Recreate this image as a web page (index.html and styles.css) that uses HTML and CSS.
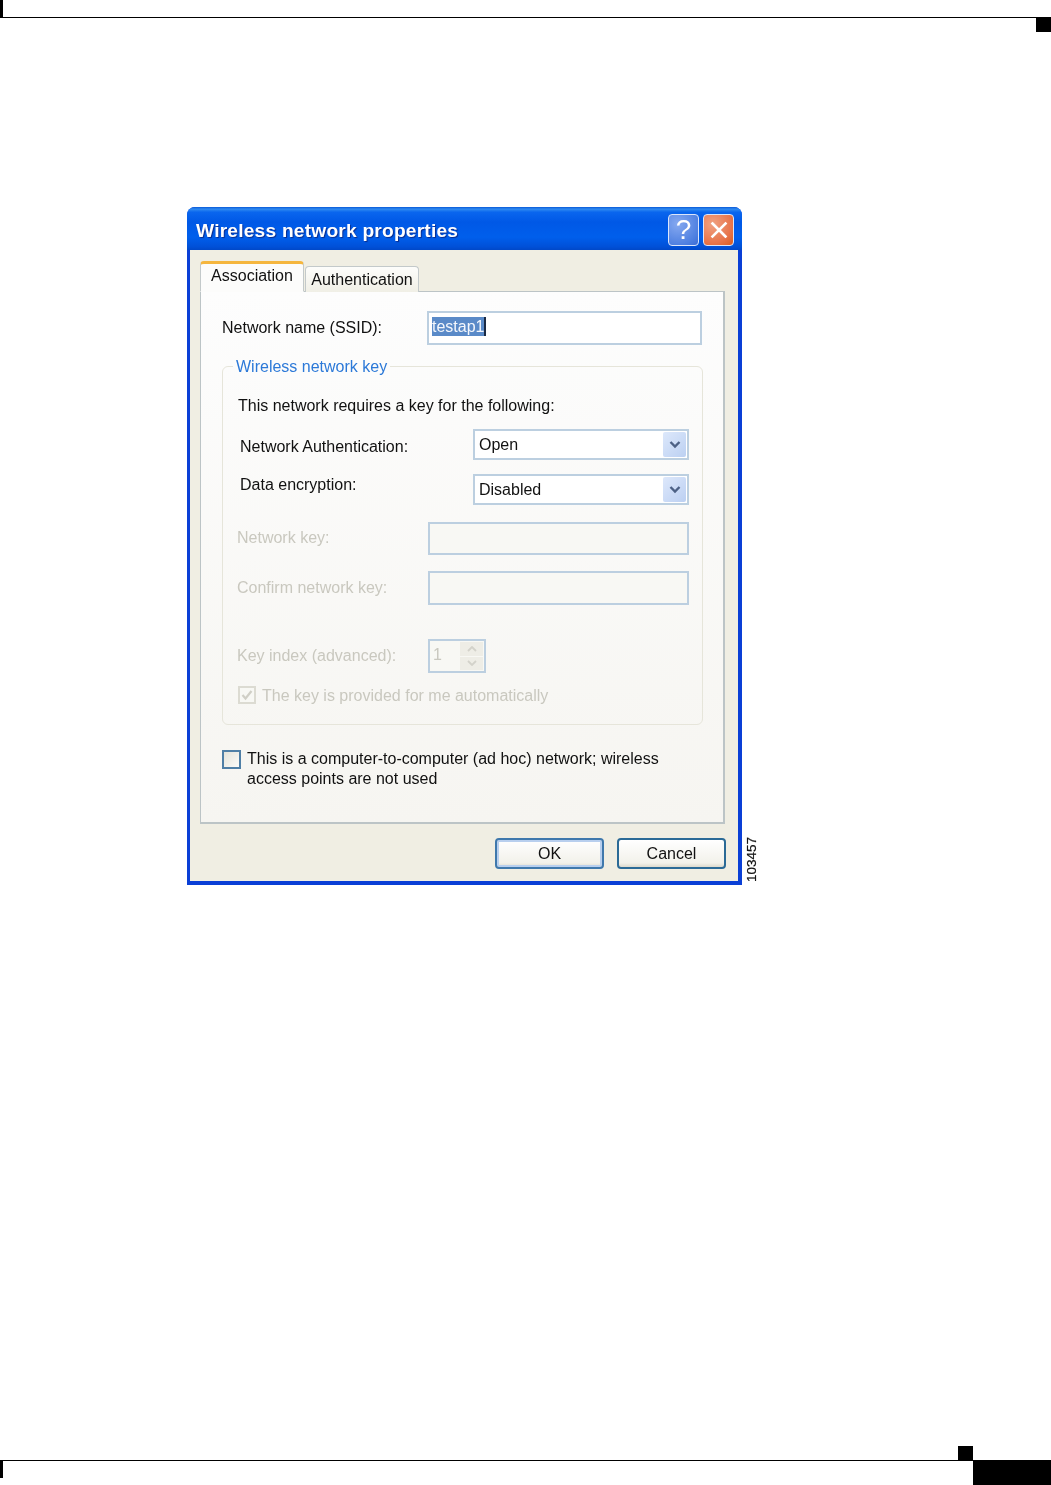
FILE: index.html
```html
<!DOCTYPE html>
<html lang="en">
<head>
<meta charset="utf-8">
<title>Wireless network properties</title>
<link rel="stylesheet" href="styles.css">
</head>
<body>
<div class="page">
  <header class="top">
    <div class="top-rule"><span class="mark"></span></div>
    <div class="top-square"></div>
  </header>
  <main class="figure">
    <section class="dialog">
      <div class="titlebar">
        <span class="title">Wireless network properties</span>
        <span class="cap cap-help">?</span>
        <span class="cap cap-close"><svg width="20" height="20" viewBox="0 0 20 20"><path d="M3.5 3.5 16.5 16.5M16.5 3.5 3.5 16.5" stroke="#fff" stroke-width="2.6" stroke-linecap="square" fill="none"/></svg></span>
      </div>
      <div class="body">
        <div class="tabs">
          <div class="tab tab-active">Association</div>
          <div class="tab">Authentication</div>
        </div>
        <div class="panel">
          <div class="row name-row">
            <span class="label-name">Network name (SSID):</span>
            <div class="field field-name"><span class="selected">testap1</span><span class="caret"></span></div>
          </div>
          <fieldset class="group">
            <legend>Wireless network key</legend>
            <p class="intro">This network requires a key for the following:</p>
            <div class="row sel-row first">
              <span class="label-sel nudge-a">Network Authentication:</span>
              <div class="select"><span class="sel-text">Open</span><span class="drop"><svg width="14" height="10" viewBox="0 0 14 10"><path d="M2.5 2 7 6.5 11.500 2" fill="none" stroke="#4d6185" stroke-width="2.4"/></svg></span></div>
            </div>
            <div class="row sel-row">
              <span class="label-sel nudge-b">Data encryption:</span>
              <div class="select"><span class="sel-text">Disabled</span><span class="drop"><svg width="14" height="10" viewBox="0 0 14 10"><path d="M2.5 2 7 6.500 11.500 2" fill="none" stroke="#4d6185" stroke-width="2.4"/></svg></span></div>
            </div>
            <div class="row off-row key">
              <span class="label-off nudge-key">Network key:</span>
              <div class="field field-off"></div>
            </div>
            <div class="row off-row confirm">
              <span class="label-off">Confirm network key:</span>
              <div class="field field-off tall"></div>
            </div>
            <div class="row off-row index">
              <span class="label-off">Key index (advanced):</span>
              <div class="field spinner">
                <span class="spin-value">1</span>
                <span class="spin-btns">
                  <span class="spin-btn"><svg width="10" height="6" viewBox="0 0 10 6"><path d="M1 5 5 1 9 5" fill="none" stroke="#d3d2ca" stroke-width="1.800"/></svg></span>
                  <span class="spin-btn"><svg width="10" height="6" viewBox="0 0 10 6"><path d="M1 1 5 5 9 1" fill="none" stroke="#d3d2ca" stroke-width="1.800"/></svg></span>
                </span>
              </div>
            </div>
            <div class="auto-row">
              <span class="check-off"><svg width="14" height="14" viewBox="0 0 14 14"><path d="M2.500 7 5.500 10.500 11.500 3" fill="none" stroke="#d0cfc6" stroke-width="2.200"/></svg></span>
              <span class="label-off nudge-auto">The key is provided for me automatically</span>
            </div>
          </fieldset>
          <div class="adhoc">
            <span class="check"></span>
            <span class="adhoc-text">This is a computer-to-computer (ad hoc) network; wireless access points are not used</span>
          </div>
        </div>
        <div class="actions">
          <div class="btn btn-default">OK</div>
          <div class="btn">Cancel</div>
        </div>
      </div>
    </section>
    <div class="fig-no">103457</div>
  </main>
  <footer class="bottom">
    <div class="bottom-square"></div>
    <div class="bottom-bar">
      <div class="bottom-rule"><span class="mark mark-low"></span></div>
      <div class="bottom-block"></div>
    </div>
  </footer>
</div>
</body>
</html>
```
FILE: styles.css
```css
* { box-sizing: border-box; }
html, body { margin: 0; padding: 0; background: #fff; }
.page { height: 1485px; width: 1051px; overflow: hidden; display: flex; flex-direction: column; font-family: "Liberation Sans", sans-serif; }

.top-rule { height: 18px; border-bottom: 1px solid #000; }
.mark { display: block; width: 3px; height: 17px; background: #000; }
.top-square { width: 15px; height: 14px; margin-left: 1036px; background: #000; }

.figure { display: flex; align-items: flex-end; margin: 175px 0 0 187px; }
.fig-no { writing-mode: vertical-rl; transform: rotate(180deg); font: 13.500px/14px "Liberation Sans", sans-serif; color: #111; margin: 0 0 3px 3px; width: 14px; -webkit-text-stroke: 0.2px #111; }

.dialog { width: 555px; height: 678px; display: flex; flex-direction: column; border-radius: 8px 8px 0 0; background: #0a3fd6; color: #111; font-size: 16px; filter: blur(0.35px); }

.titlebar { height: 43px; display: flex; align-items: center; padding: 2px 8px 0 9px; border-radius: 8px 8px 0 0;
  background: linear-gradient(#0a5ad8 0, #2f8af0 5%, #0a66ee 12%, #0058e6 35%, #005fec 70%, #0050d8 92%, #0048c8 100%); }
.title { flex: 1; color: #fff; font-family: "Liberation Sans", sans-serif; font-weight: bold; font-size: 19.200px; letter-spacing: 0.2px; padding-top: 3px; text-shadow: 1px 1px 1px #0a2c8c; }
.cap { width: 31px; height: 32px; border: 1px solid #dbe6fb; border-radius: 4px; display: flex; align-items: center; justify-content: center; color: #fff; }
.cap-help { background: radial-gradient(circle at 30% 30%, #86a9f0, #4c7ee0 75%, #3d6cd4); font: 28px/1 "Liberation Sans", sans-serif; margin-right: 4px; }
.cap-close { background: radial-gradient(circle at 30% 30%, #f0a283, #e7744a 65%, #d95c1e); }

.body { flex: 1; margin: 0 4px 4px 3px; background: #f0eee3; padding: 11px 13px 0 10px; display: flex; flex-direction: column; }

.tabs { display: flex; align-items: flex-end; height: 31px; position: relative; z-index: 1; margin-bottom: -1px; }
.tab { height: 26px; width: 114px; margin-left: 1px; border: 1px solid #c3c9ca; border-bottom: 0; border-radius: 4px 4px 0 0; background: linear-gradient(#fdfdfb, #f0efe6); text-align: center; line-height: 25px; }
.tab-active { height: 31px; width: 104px; margin-left: 0; border-top: 3px solid #f5b63e; background: #fcfcfb; line-height: 24px; padding-bottom: 5px; border-bottom: 1px solid #fcfcfb; }

.panel { height: 533px; border: 1px solid #bcc4c6; border-right-width: 2px; border-bottom-width: 2px; background: linear-gradient(#fdfdfd, #f6f5f1); padding: 19px 21px 0 21px; }

.row { display: flex; align-items: center; }
.name-row { height: 34px; }
.label-name { width: 207px; }
.field { border: 2px solid #bccfe0; background: #fff; }
.field-name { flex: 0 0 275px; height: 34px; display: flex; align-items: center; padding: 0 0 3px 3px; }
.selected { background: #5a8ac8; color: #f4f7fc; line-height: 19px; height: 19px; }
.caret { width: 2px; height: 19px; background: #1a2a44; }

.group { margin: 10px 0 0; width: 481px; height: 370px; border: 1.500px solid #e6e5da; border-radius: 6px; padding: 0 13px 0 15px; display: block; min-width: 0; }
.group legend { padding: 2px 3px 0; margin-left: -5px; line-height: 20px; color: #2c79d8; }
.intro { margin: 19px 0 0; line-height: 20px; }

.sel-row { height: 31px; margin-top: 14px; justify-content: space-between; }
.sel-row.first { margin-top: 13px; }
.label-sel { margin-left: 2px; }
.nudge-a { padding-top: 5px; }
.nudge-b { padding-bottom: 9px; }
.select { width: 216px; height: 31px; border: 2px solid #bccfe0; background: #fff; display: flex; align-items: center; justify-content: space-between; padding: 1px 1px 1px 4px; }
.sel-text { padding-top: 1px; }
.drop { width: 23px; height: 25px; background: linear-gradient(135deg, #dde8fb, #bcd0f2); border-radius: 2px; display: flex; align-items: center; justify-content: center; }

.off-row { justify-content: space-between; margin-left: -1px; }
.label-off { color: #c9c8bf; }
.nudge-key { padding-bottom: 2px; }
.nudge-auto { padding-top: 1px; }
.key { height: 33px; margin-top: 17px; }
.confirm { height: 34px; margin-top: 16px; }
.index { height: 34px; margin-top: 34px; }
.field-off { flex: 0 0 261px; height: 33px; background: #f8f8f4; }
.field-off.tall { height: 34px; }
.spinner { flex: 0 0 58px; height: 34px; margin-right: 203px; background: #f8f8f4; display: flex; justify-content: space-between; padding: 1px 1px 1px 3px; }
.spin-value { color: #c9c8bf; line-height: 26px; }
.spin-btns { width: 23px; display: flex; flex-direction: column; gap: 1px; }
.spin-btn { flex: 1; background: #eeede6; display: flex; align-items: center; justify-content: center; }
.auto-row { display: flex; align-items: center; gap: 6px; height: 18px; margin-top: 13px; }
.check-off { width: 18px; height: 18px; border: 2px solid #dcdbd2; display: flex; align-items: center; justify-content: center; background: #f8f8f4; }

.adhoc { display: flex; gap: 6px; margin-top: 25px; }
.check { flex: 0 0 19px; height: 19px; border: 2px solid #4f7fa6; background: linear-gradient(135deg, #e4e3da, #fbfbf8); }
.adhoc-text { line-height: 20px; margin-top: -1px; width: 425px; }

.actions { display: flex; justify-content: flex-end; gap: 13px; margin: 14px -1px 0 0; }
.btn { width: 109px; height: 31px; border: 2px solid #2b6a96; border-radius: 4px; background: linear-gradient(#fff, #f2f1ea 85%, #dcd9cc); text-align: center; line-height: 28px; }
.btn-default { border-color: #3f78ac; box-shadow: inset 0 0 0 2px #b8cfee; }

.bottom { margin-top: auto; }
.bottom-square { width: 15px; height: 14px; margin-left: 958px; background: #000; }
.bottom-bar { display: flex; height: 25px; }
.bottom-rule { flex: 1; border-top: 1px solid #000; }
.mark-low { height: 17px; }
.bottom-block { width: 78px; background: #000; }
```
